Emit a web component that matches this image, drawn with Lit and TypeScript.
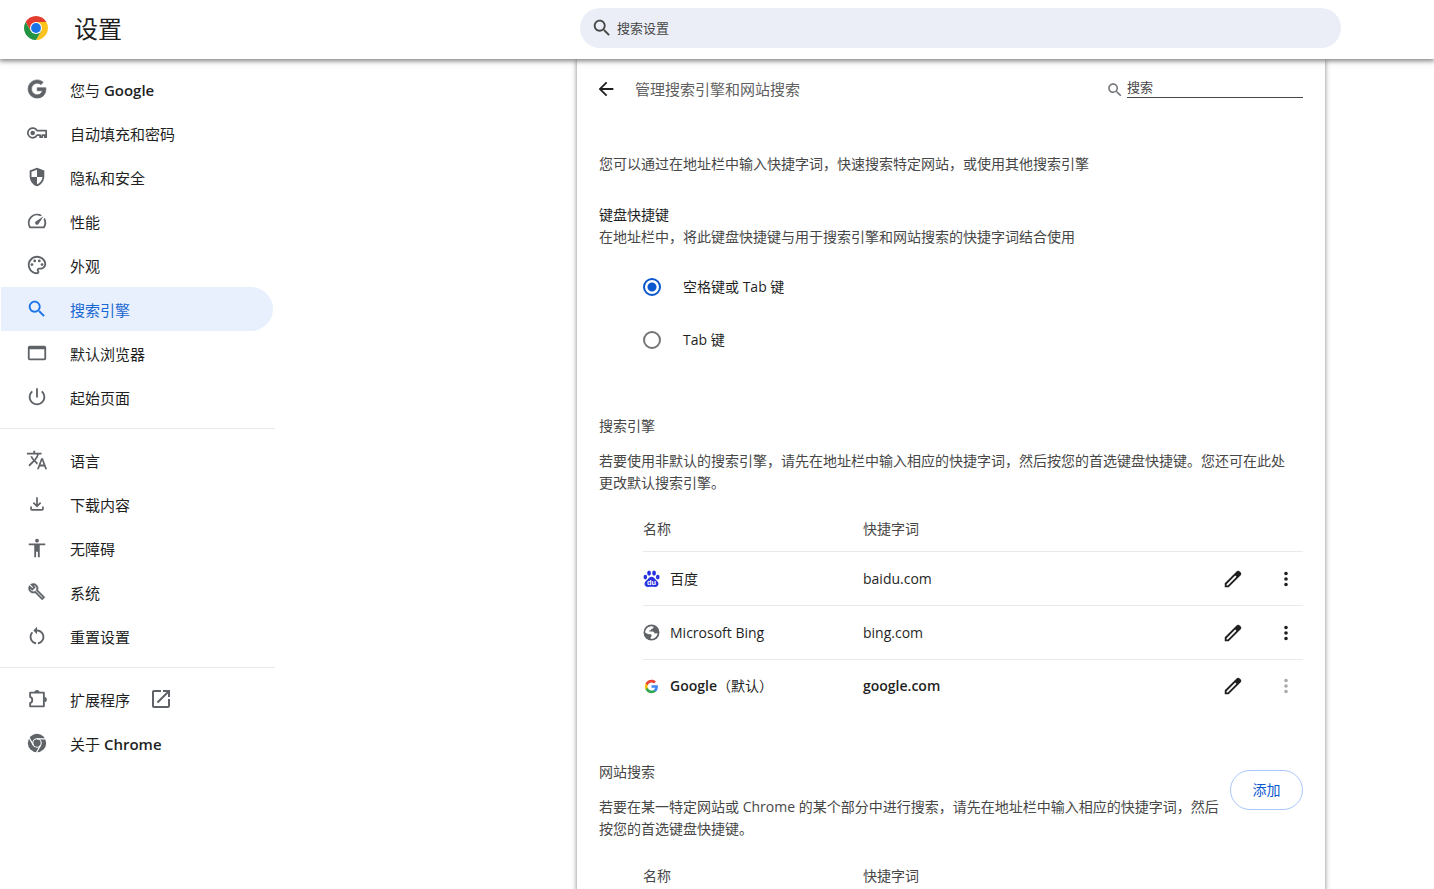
import { LitElement, html, svg, css, nothing, type SVGTemplateResult } from "lit";
import { customElement, property, state } from "lit/decorators.js";
import { classMap } from "lit/directives/class-map.js";

interface Glyph {
  box: string;
  art: SVGTemplateResult;
}

const glyph = (d: string, box = "0 0 24 24"): Glyph => ({ box, art: svg`<path fill="currentColor" d=${d} />` });

const SEARCH =
  "M15.5 14h-.79l-.28-.27C15.41 12.59 16 11.11 16 9.5 16 5.91 13.09 3 9.5 3S3 5.91 3 9.5 5.91 16 9.5 16c1.61 0 3.09-.59 4.23-1.57l.27.28v.79l5 4.99L20.49 19l-4.99-5zm-6 0C7.01 14 5 11.99 5 9.5S7.01 5 9.5 5 14 7.01 14 9.5 11.99 14 9.5 14z";

const GLYPHS: Record<string, Glyph> = {
  google: {
    box: "-2.5 -2.5 29 29",
    art: svg`<path fill="currentColor" stroke="currentColor" stroke-width="0.8" d="M12.24 10.285V14.4h6.806c-.275 1.765-2.056 5.174-6.806 5.174-4.095 0-7.439-3.389-7.439-7.574s3.345-7.574 7.439-7.574c2.33 0 3.891.989 4.785 1.849l3.254-3.138C18.189 1.186 15.479 0 12.24 0c-6.635 0-12 5.365-12 12s5.365 12 12 12c6.926 0 11.52-4.869 11.52-11.726 0-.788-.085-1.39-.189-1.989H12.24z" />`,
  },
  key: {
    box: "0 0 24 24",
    art: svg`<path fill="none" stroke="currentColor" stroke-width="1.9" stroke-linejoin="round" d="M12 9.5H22V16.6H20.4V14.3H17.6V16.6H15.4V14.3H12A5.3 5.3 0 1 1 12 9.5Z" /><circle cx="7.3" cy="12" r="2.5" fill="currentColor" />`,
  },
  shield: glyph(
    "M12 2 4 5v6.1c0 5 3.4 9.8 8 10.9 4.6-1.1 8-5.9 8-10.9V5l-8-3zM12 12h6c-.4 3.6-2.8 6.9-6 7.9V12H6V6.4l6-2.3V12z"
  ),
  speed: glyph(
    "M20.38 8.57l-1.23 1.85a8 8 0 0 1-.22 7.58H5.07A8 8 0 0 1 15.58 6.85l1.85-1.23A10 10 0 0 0 3.35 19a2 2 0 0 0 1.72 1h13.85a2 2 0 0 0 1.74-1 10 10 0 0 0-.27-10.44zm-9.79 6.84a2 2 0 0 0 2.83 0l5.66-8.49-8.49 5.66a2 2 0 0 0 0 2.83z"
  ),
  palette: {
    box: "0 0 24 24",
    art: svg`<path fill="currentColor" d="M12 22C6.49 22 2 17.51 2 12S6.49 2 12 2s10 4.04 10 9c0 3.31-2.69 6-6 6h-1.77c-.28 0-.5.22-.5.5 0 .12.05.23.13.33.41.47.64 1.06.64 1.67 0 1.38-1.12 2.5-2.5 2.5zm0-18c-4.41 0-8 3.59-8 8s3.59 8 8 8c.28 0 .5-.22.5-.5 0-.16-.08-.28-.14-.35-.41-.46-.63-1.05-.63-1.65 0-1.38 1.12-2.5 2.5-2.5H16c2.21 0 4-1.79 4-4 0-3.86-3.59-7-8-7z" /><g fill="currentColor"><circle cx="6.5" cy="11.5" r="1.5" /><circle cx="9.5" cy="7.5" r="1.5" /><circle cx="14.5" cy="7.5" r="1.5" /><circle cx="17.5" cy="11.5" r="1.5" /></g>`,
  },
  search: glyph(SEARCH),
  browser: glyph(
    "M4 4h16a2 2 0 0 1 2 2v12a2 2 0 0 1-2 2H4a2 2 0 0 1-2-2V6a2 2 0 0 1 2-2zm0 4v10h16V8H4z"
  ),
  power: glyph(
    "M13 2.5h-2v10h2v-10zm4.83 2.67l-1.42 1.42C17.99 7.86 19 9.81 19 12c0 3.87-3.13 7-7 7s-7-3.13-7-7c0-2.19 1.01-4.14 2.58-5.42L6.17 5.17C4.23 6.82 3 9.26 3 12c0 4.97 4.03 9 9 9s9-4.03 9-9c0-2.74-1.23-5.18-3.17-6.83z"
  ),
  translate: glyph(
    "M12.87 15.07l-2.54-2.51.03-.03c1.74-1.94 2.98-4.17 3.71-6.53H17V4h-7V2H8v2H1v1.99h11.17C11.5 7.92 10.44 9.75 9 11.35 8.07 10.32 7.3 9.19 6.69 8h-2c.73 1.63 1.73 3.17 2.98 4.56l-5.09 5.02L4 19l5-5 3.11 3.11.76-2.04zM18.5 10h-2L12 22h2l1.12-3h4.75L21 22h2l-4.5-12zm-2.62 7l1.62-4.33L19.12 17h-3.24z"
  ),
  download: glyph(
    "M12 16l-5-5 1.4-1.45 2.6 2.6V4h2v8.15l2.6-2.6L17 11l-5 5zm-6 4c-.55 0-1.02-.2-1.41-.59A1.93 1.93 0 0 1 4 18v-3h2v3h12v-3h2v3c0 .55-.2 1.02-.59 1.41-.39.39-.86.59-1.41.59H6z",
    "-1 -1 26 26"
  ),
  accessibility: glyph(
    "M12 2c1.1 0 2 .9 2 2s-.9 2-2 2-2-.9-2-2 .9-2 2-2zm9 7h-6v13h-2v-6h-2v6H9V9H3V7h18v2z"
  ),
  wrench: {
    box: "-2.5 -2.5 30 30",
    art: svg`<path fill="currentColor" stroke="currentColor" stroke-width="0.7" d="M22.61 18.99l-9.08-9.08c.93-2.34.45-5.1-1.44-7C9.79.61 6.21.4 3.66 2.26L7.5 6.11 6.08 7.52 2.25 3.69C.39 6.23.6 9.82 2.9 12.11c1.86 1.86 4.57 2.35 6.89 1.48l9.11 9.11c.39.39 1.02.39 1.41 0l2.3-2.3c.4-.38.4-1.01 0-1.41zm-3 1.6l-9.46-9.46c-.61.45-1.29.72-2 .82-1.36.2-2.79-.21-3.83-1.25C3.37 9.76 2.93 8.5 3 7.26l3.09 3.09 4.24-4.24-3.09-3.09c1.24-.07 2.49.37 3.44 1.31 1.08 1.08 1.49 2.57 1.24 3.96-.12.71-.42 1.37-.88 1.96l9.45 9.45-.88.89z" />`,
  },
  restart: glyph(
    "M12 5V2L8 6l4 4V7c3.31 0 6 2.69 6 6 0 2.97-2.17 5.43-5 5.91v2.02c3.95-.49 7-3.85 7-7.93 0-4.42-3.58-8-8-8zm-6 8c0-1.65.67-3.15 1.76-4.24L6.34 7.34C4.9 8.79 4 10.79 4 13c0 4.08 3.05 7.44 7 7.93v-2.02c-2.83-.48-5-2.94-5-5.91z"
  ),
  extension: {
    box: "0 0 24 24",
    art: svg`<path fill="none" stroke="currentColor" stroke-width="2" stroke-linejoin="round" d="M4.5 5H19.5V20H4.5V16.2C7.6 15.8 7.6 10.2 4.5 9.8Z" /><path fill="currentColor" d="M9.2 5a2.8 2.8 0 0 1 5.6 0zM20 9.7a2.8 2.8 0 0 1 0 5.6z" />`,
  },
  chrome: {
    box: "0 0 24 24",
    art: svg`<circle cx="12" cy="12" r="10" fill="currentColor" /><circle cx="12" cy="12" r="5.2" fill="#fff" /><circle cx="12" cy="12" r="4" fill="currentColor" /><path fill="none" stroke="#fff" stroke-width="1.3" d="M12 7.4H22M15.98 14.3L10.9 23.1M8.02 14.3L2.94 5.5" />`,
  },
  open: glyph(
    "M19 19H5V5h7V3H5c-1.11 0-2 .9-2 2v14c0 1.1.89 2 2 2h14c1.1 0 2-.9 2-2v-7h-2v7zM14 3v2h3.59l-9.83 9.83 1.41 1.41L19 6.41V10h2V3h-7z"
  ),
  back: glyph("M20 11H7.83l5.59-5.59L12 4l-8 8 8 8 1.41-1.41L7.83 13H20v-2z"),
  edit: glyph(
    "M5 19h1.4l9.4-9.4-1.4-1.4L5 17.6V19zm-2 2v-4.25L16.2 3.58c.2-.19.42-.33.66-.43.24-.1.5-.15.76-.15s.53.05.78.15.47.25.65.45l1.38 1.4c.2.18.34.4.43.65a2.2 2.2 0 0 1 0 1.51c-.09.24-.23.46-.43.66L7.25 21H3z"
  ),
  more: glyph(
    "M12 8a2 2 0 1 0 0-4 2 2 0 0 0 0 4zm0 2a2 2 0 1 0 0 4 2 2 0 0 0 0-4zm0 6a2 2 0 1 0 0 4 2 2 0 0 0 0-4z"
  ),
  logo: {
    box: "0 0 24 24",
    art: svg`<path fill="#e33b2e" d="M1.61 6A12 12 0 0 1 22.39 6H12L6.8 15z" /><path fill="#fcc31e" d="M22.39 6A12 12 0 0 1 12 24L17.2 15L12 6z" /><path fill="#229342" d="M12 24A12 12 0 0 1 1.61 6L6.8 15H17.2z" /><circle cx="12" cy="12" r="6" fill="#fff" /><circle cx="12" cy="12" r="4.9" fill="#1a73e8" />`,
  },
  baidu: {
    box: "0 0 16 16",
    art: svg`<g fill="#2932e1"><ellipse cx="5.7" cy="2.9" rx="1.8" ry="2.5" /><ellipse cx="10.4" cy="2.9" rx="1.8" ry="2.5" /><ellipse cx="2.2" cy="6.7" rx="1.7" ry="2.2" /><ellipse cx="13.9" cy="6.7" rx="1.7" ry="2.2" /><path d="M8 6.3c1.6 0 2.5 1.2 3.5 2.3 1.2 1.3 3.1 2.3 3.1 4.4 0 1.9-1.4 3-3.2 3-1.2 0-2.2-.2-3.4-.2s-2.2.2-3.4.2c-1.8 0-3.2-1.1-3.2-3 0-2.1 1.9-3.1 3.1-4.4C5.5 7.5 6.4 6.3 8 6.3z" /></g><text x="8" y="14.4" text-anchor="middle" font-family="Liberation Sans, sans-serif" font-weight="700" font-size="7" fill="#fff">du</text>`,
  },
  globe: {
    box: "0 0 16 16",
    art: svg`<circle cx="8" cy="8" r="7.5" fill="#5f6368" /><path fill="#fff" d="M2 8C2.2 4.9 4.5 2.5 7.6 2.1L10 2.5C10 3.6 9.2 4.4 8 4.5L7.4 5.8H6V7H9.2C10.2 7 10.6 7.8 10.6 8.6L12 8.9L13.8 8.6C13.4 11.5 11 13.8 8 13.9C7.2 13.7 7 13.2 7.1 12.6L8.2 11.2C8.2 10.3 7.5 9.7 6.6 9.7L4.5 9.5Z" />`,
  },
  gcolor: {
    box: "-2 -2 28 28",
    art: svg`<path fill="#4285f4" d="M22.56 12.25c0-.78-.07-1.53-.2-2.25H12v4.26h5.92c-.26 1.37-1.04 2.53-2.21 3.31v2.77h3.57c2.08-1.92 3.28-4.74 3.28-8.09z" /><path fill="#34a853" d="M12 23c2.97 0 5.46-.98 7.28-2.66l-3.57-2.77c-.98.66-2.23 1.06-3.71 1.06-2.86 0-5.29-1.93-6.16-4.53H2.18v2.84C3.99 20.53 7.7 23 12 23z" /><path fill="#fbbc05" d="M5.84 14.09c-.22-.66-.35-1.36-.35-2.09s.13-1.43.35-2.09V7.07H2.18C1.43 8.55 1 10.22 1 12s.43 3.45 1.18 4.93l2.85-2.22.81-.62z" /><path fill="#ea4335" d="M12 5.38c1.62 0 3.06.56 4.21 1.64l3.15-3.15C17.45 2.09 14.97 1 12 1 7.7 1 3.99 3.47 2.18 7.07l3.66 2.84c.87-2.6 3.3-4.53 6.16-4.53z" />`,
  },
};

/* Latin words carry the emphasis; Chinese characters stay at regular weight. */
const emphasizeLatin = (text: string) =>
  text
    .split(/([A-Za-z.]+)/)
    .filter(Boolean)
    .map((part) => (/^[A-Za-z]/.test(part) ? html`<span class="latin">${part}</span>` : part));

@customElement("ui-icon")
class UiIcon extends LitElement {
  @property() name = "";

  static styles = css`
    :host {
      display: inline-flex;
      flex: none;
      width: 22px;
      height: 22px;
    }
    .art {
      width: 100%;
      height: 100%;
      display: block;
    }
  `;

  render() {
    const g = GLYPHS[this.name];
    return g ? html`<svg class="art" viewBox=${g.box} aria-hidden="true">${g.art}</svg>` : nothing;
  }
}

interface MenuItem {
  id: string;
  icon: string;
  label: string;
  external?: boolean;
}

const MENU: MenuItem[][] = [
  [
    { id: "people", icon: "google", label: "您与 Google" },
    { id: "autofill", icon: "key", label: "自动填充和密码" },
    { id: "privacy", icon: "shield", label: "隐私和安全" },
    { id: "performance", icon: "speed", label: "性能" },
    { id: "appearance", icon: "palette", label: "外观" },
    { id: "search", icon: "search", label: "搜索引擎" },
    { id: "defaultBrowser", icon: "browser", label: "默认浏览器" },
    { id: "onStartup", icon: "power", label: "起始页面" },
  ],
  [
    { id: "languages", icon: "translate", label: "语言" },
    { id: "downloads", icon: "download", label: "下载内容" },
    { id: "accessibility", icon: "accessibility", label: "无障碍" },
    { id: "system", icon: "wrench", label: "系统" },
    { id: "reset", icon: "restart", label: "重置设置" },
  ],
  [
    { id: "extensions", icon: "extension", label: "扩展程序", external: true },
    { id: "about", icon: "chrome", label: "关于 Chrome" },
  ],
];

@customElement("settings-menu")
class SettingsMenu extends LitElement {
  @property() selected = "search";

  static styles = css`
    :host {
      display: block;
      padding-top: 8px;
    }
    .group + .group {
      margin-top: 9px;
      padding-top: 9px;
      border-top: 1px solid #e8eaed;
    }
    .item {
      display: flex;
      align-items: center;
      height: 44px;
      margin: 0 2px 0 1px;
      padding-left: 25px;
      border-radius: 0 22px 22px 0;
      color: #1f1f1f;
      font-size: 15px;
      text-decoration: none;
    }
    .latin {
      font-weight: 600;
    }
    .icon {
      margin-right: 22px;
      color: #5f6368;
    }
    .text {
      padding-top: 2px;
      line-height: 22px;
    }
    .external {
      width: 24px;
      height: 24px;
      margin-left: 19px;
      color: #5f6368;
    }
    .item.selected {
      background: #e8f0fe;
      color: #1967d2;
    }
    .item.selected .icon {
      color: #1a73e8;
    }
  `;

  render() {
    return html`<nav aria-label="设置">
      ${MENU.map(
        (group) => html`<div class="group">
          ${group.map(
            (item) => html`<a
              class=${classMap({ item: true, selected: item.id === this.selected })}
              href="#${item.id}"
              ><ui-icon class="icon" name=${item.icon}></ui-icon><span class="text">${emphasizeLatin(item.label)}</span
              >${item.external ? html`<ui-icon class="external" name="open"></ui-icon>` : nothing}</a
            >`
          )}
        </div>`
      )}
    </nav>`;
  }
}

interface Engine {
  icon: string;
  name: string;
  keyword: string;
  isDefault?: boolean;
}

const ENGINES: Engine[] = [
  { icon: "baidu", name: "百度", keyword: "baidu.com" },
  { icon: "globe", name: "Microsoft Bing", keyword: "bing.com" },
  { icon: "gcolor", name: "Google（默认）", keyword: "google.com", isDefault: true },
];

@customElement("engine-table")
class EngineTable extends LitElement {
  @property({ attribute: false }) engines: Engine[] = [];

  static styles = css`
    :host {
      display: block;
      margin: 13px 0 0 44px;
    }
    .table {
      width: 100%;
      table-layout: fixed;
      border-collapse: collapse;
      font-size: 14px;
      line-height: 22px;
      text-align: left;
    }
    .name-col {
      width: 220px;
    }
    .action-col {
      width: 110px;
    }
    .head {
      height: 44px;
      padding: 0;
      border-bottom: 1px solid #e8eaed;
      color: #474747;
      font-weight: 400;
    }
    .cell {
      height: 53px;
      padding: 0;
      border-bottom: 1px solid #e8eaed;
      color: #1f1f1f;
    }
    .row:last-child .cell {
      height: 52px;
      border-bottom: none;
    }
    .default .latin {
      font-weight: 600;
    }
    .name {
      display: flex;
      align-items: center;
      gap: 10px;
    }
    .favicon {
      width: 17px;
      height: 17px;
    }
    .actions {
      display: flex;
      justify-content: flex-end;
      gap: 19px;
    }
    .action {
      display: flex;
      align-items: center;
      justify-content: center;
      width: 34px;
      height: 34px;
      padding: 0;
      border: none;
      border-radius: 17px;
      background: none;
      color: #1f1f1f;
    }
    .action:disabled {
      color: #aaa;
    }
  `;

  render() {
    return html`<table class="table">
      <colgroup>
        <col class="name-col" />
        <col />
        <col class="action-col" />
      </colgroup>
      <thead>
        <tr>
          <th class="head" scope="col">名称</th>
          <th class="head" scope="col">快捷字词</th>
          <td class="head"></td>
        </tr>
      </thead>
      <tbody>
        ${this.engines.map(
          (e) => html`<tr class=${classMap({ row: true, default: !!e.isDefault })}>
            <td class="cell">
              <div class="name">
                <ui-icon class="favicon" name=${e.icon}></ui-icon><span>${emphasizeLatin(e.name)}</span>
              </div>
            </td>
            <td class="cell">${emphasizeLatin(e.keyword)}</td>
            <td class="cell">
              <div class="actions">
                <button class="action" aria-label="修改 ${e.name}"><ui-icon name="edit"></ui-icon></button>
                <button class="action" aria-label="更多操作 ${e.name}" ?disabled=${e.isDefault}>
                  <ui-icon name="more"></ui-icon>
                </button>
              </div>
            </td>
          </tr>`
        )}
      </tbody>
    </table>`;
  }
}

@customElement("app-root")
class AppRoot extends LitElement {
  @state() private shortcut = "space";

  static styles = css`
    :host {
      display: flex;
      flex-direction: column;
      height: 100vh;
      overflow: hidden;
      background: #fff;
      color: #474747;
      font-family: "Open Sans", "Noto Sans CJK SC", sans-serif;
      font-size: 14px;
      line-height: 22px;
    }
    .toolbar {
      position: relative;
      z-index: 1;
      display: grid;
      grid-template-columns: minmax(180px, 580fr) minmax(0, 761px) minmax(16px, 93fr);
      align-items: center;
      flex: none;
      padding: 8px 0 11px;
      background: #fff;
      box-shadow: 0 1px 5px 1px rgba(0, 0, 0, 0.5);
    }
    .brand {
      display: flex;
      align-items: center;
      gap: 26px;
      padding-left: 24px;
    }
    .logo {
      width: 24px;
      height: 24px;
    }
    .title {
      margin: 0;
      padding-top: 2px;
      color: #1f1f1f;
      font-size: 24px;
      font-weight: 400;
      line-height: 32px;
    }
    .search {
      display: flex;
      align-items: center;
      gap: 4px;
      height: 40px;
      padding: 0 20px 0 11px;
      border-radius: 20px;
      background: #ebeef7;
      color: #474747;
    }
    .field {
      flex: 1;
      min-width: 0;
      padding: 0;
      border: none;
      outline: none;
      background: none;
      color: #1f1f1f;
      font: inherit;
      font-size: 13px;
    }
    .field::placeholder {
      color: #474747;
      opacity: 1;
    }
    .body {
      display: grid;
      grid-template-columns: 275px minmax(16px, 302fr) minmax(0, 748px) minmax(16px, 109fr);
      flex: 1;
      min-height: 0;
      overflow: auto;
      scrollbar-width: none;
    }
    .card {
      grid-column: 3;
      padding: 0 22px 24px;
      background: #fff;
      box-shadow: 0 1px 5px rgba(0, 0, 0, 0.5);
    }
    .page-head {
      display: flex;
      align-items: center;
      height: 60px;
    }
    .back {
      display: flex;
      width: 22px;
      height: 22px;
      margin: 0 18px 0 -4px;
      padding: 0;
      border: none;
      background: none;
      color: #1f1f1f;
    }
    .page-title {
      flex: 1;
      margin: 0;
      color: #5f5f5f;
      font-size: 15px;
      font-weight: 400;
    }
    .filter {
      display: flex;
      align-items: center;
      gap: 3px;
      color: #6f7277;
    }
    .filter-icon {
      width: 18px;
      height: 18px;
      margin-top: 2px;
    }
    .filter-field {
      box-sizing: border-box;
      flex: none;
      width: 176px;
      height: 21px;
      margin-bottom: 3px;
      padding-bottom: 1px;
      border-bottom: 1px solid #474747;
    }
    .text {
      margin: 0;
      padding-right: 6px;
    }
    .intro {
      margin-top: 34px;
    }
    .heading {
      margin: 48px 0 13px;
      font-size: 14px;
      font-weight: 400;
    }
    .label {
      margin: 29px 0 0;
      color: #1f1f1f;
      font-size: 14px;
      font-weight: 400;
    }
    .choices {
      margin: 12px 0 0 44px;
      padding: 0 0 1px;
      border: none;
    }
    .choice {
      display: flex;
      align-items: center;
      gap: 22px;
      height: 53px;
      color: #1f1f1f;
    }
    .radio {
      appearance: none;
      box-sizing: border-box;
      width: 18px;
      height: 18px;
      margin: 0;
      border: 2px solid #747775;
      border-radius: 50%;
    }
    .radio:checked {
      border-color: #0b57d0;
      background: radial-gradient(circle, #0b57d0 4px, #fff 5px);
    }
    .split {
      display: flex;
      align-items: flex-start;
      margin: 49px 0 14px;
    }
    .split-text {
      flex: 1;
    }
    .split-text .heading {
      margin-top: 0;
    }
    .split + engine-table {
      margin-top: 0;
    }
    .add {
      flex: none;
      width: 73px;
      height: 40px;
      margin-top: 9px;
      padding: 0;
      border: 1px solid #a8c7fa;
      border-radius: 20px;
      background: #fff;
      color: #0b57d0;
      font: inherit;
    }
  `;

  private choice(value: string, label: string) {
    return html`<label class="choice"
      ><input
        class="radio"
        type="radio"
        name="shortcut"
        value=${value}
        .checked=${this.shortcut === value}
        @change=${() => (this.shortcut = value)}
      /><span>${label}</span></label
    >`;
  }

  render() {
    return html`
      <header class="toolbar">
        <div class="brand">
          <ui-icon class="logo" name="logo"></ui-icon>
          <h1 class="title">设置</h1>
        </div>
        <label class="search">
          <ui-icon name="search"></ui-icon>
          <input class="field" type="text" placeholder="搜索设置" aria-label="搜索设置" />
        </label>
      </header>
      <div class="body">
        <settings-menu selected="search"></settings-menu>
        <main class="card">
          <div class="page-head">
            <button class="back" aria-label="返回"><ui-icon name="back"></ui-icon></button>
            <h2 class="page-title">管理搜索引擎和网站搜索</h2>
            <label class="filter">
              <ui-icon class="filter-icon" name="search"></ui-icon>
              <input class="field filter-field" type="text" placeholder="搜索" aria-label="搜索" />
            </label>
          </div>
          <p class="text intro">您可以通过在地址栏中输入快捷字词，快速搜索特定网站，或使用其他搜索引擎</p>
          <h3 class="label">键盘快捷键</h3>
          <p class="text">在地址栏中，将此键盘快捷键与用于搜索引擎和网站搜索的快捷字词结合使用</p>
          <fieldset class="choices" aria-label="键盘快捷键">
            ${this.choice("space", "空格键或 Tab 键")} ${this.choice("tab", "Tab 键")}
          </fieldset>
          <h3 class="heading">搜索引擎</h3>
          <p class="text">
            若要使用非默认的搜索引擎，请先在地址栏中输入相应的快捷字词，然后按您的首选键盘快捷键。您还可在此处更改默认搜索引擎。
          </p>
          <engine-table .engines=${ENGINES}></engine-table>
          <section class="split">
            <div class="split-text">
              <h3 class="heading">网站搜索</h3>
              <p class="text">
                若要在某一特定网站或 Chrome 的某个部分中进行搜索，请先在地址栏中输入相应的快捷字词，然后按您的首选键盘快捷键。
              </p>
            </div>
            <button class="add">添加</button>
          </section>
          <engine-table .engines=${[]}></engine-table>
        </main>
      </div>
    `;
  }
}
